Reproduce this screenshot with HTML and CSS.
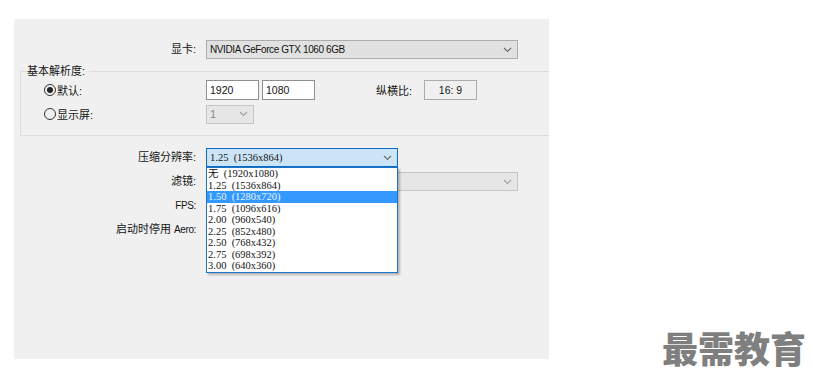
FILE: index.html
```html
<!DOCTYPE html>
<html lang="zh-CN">
<head>
  <meta charset="UTF-8" />
  <title>显示设置</title>
  <link rel="stylesheet" href="styles.css">
</head>
<body>
  <div class="screen">
    <div class="panel">
      <div class="row row-gpu">
        <span class="label">显卡:</span>
        <div class="select select-wide">
          <span class="gpu-name">NVIDIA GeForce GTX 1060 6GB</span>
          <svg class="chev" width="9" height="6" viewBox="0 0 9 6"><polyline points="1,1 4.5,4.5 8,1" /></svg>
        </div>
      </div>

      <fieldset class="group">
        <legend>基本解析度:</legend>
        <div class="group-row">
          <label class="radio"><span class="dot checked"></span>默认:</label>
          <div class="controls">
            <span class="input">1920</span>
            <span class="input">1080</span>
            <span class="ratio-label">纵横比:</span>
            <span class="ratio">16:&nbsp;9</span>
          </div>
        </div>
        <div class="group-row">
          <label class="radio"><span class="dot"></span>显示屏:</label>
          <div class="select select-small disabled">
            <span>1</span>
            <svg class="chev" width="9" height="6" viewBox="0 0 9 6"><polyline points="1,1 4.5,4.5 8,1" /></svg>
          </div>
        </div>
      </fieldset>

      <div class="rows">
        <div class="row">
          <span class="label">压缩分辨率:</span>
          <div class="combo">
            <div class="select select-open">
              <span>1.25&nbsp;&nbsp;(1536x864)</span>
              <svg class="chev" width="9" height="6" viewBox="0 0 9 6"><polyline points="1,1 4.5,4.5 8,1" /></svg>
            </div>
            <ul class="dropdown">
              <li>无&nbsp;&nbsp;(1920x1080)</li>
              <li>1.25&nbsp;&nbsp;(1536x864)</li>
              <li class="active">1.50&nbsp;&nbsp;(1280x720)</li>
              <li>1.75&nbsp;&nbsp;(1096x616)</li>
              <li>2.00&nbsp;&nbsp;(960x540)</li>
              <li>2.25&nbsp;&nbsp;(852x480)</li>
              <li>2.50&nbsp;&nbsp;(768x432)</li>
              <li>2.75&nbsp;&nbsp;(698x392)</li>
              <li>3.00&nbsp;&nbsp;(640x360)</li>
            </ul>
          </div>
        </div>
        <div class="row">
          <span class="label">滤镜:</span>
          <div class="select select-wide disabled">
            <span></span>
            <svg class="chev" width="9" height="6" viewBox="0 0 9 6"><polyline points="1,1 4.5,4.5 8,1" /></svg>
          </div>
        </div>
        <div class="row">
          <span class="label"><span class="latin">FPS:</span></span>
        </div>
        <div class="row">
          <span class="label">启动时停用 <span class="latin">Aero:</span></span>
        </div>
      </div>
    </div>

    <div class="watermark">最需教育</div>
  </div>
</body>
</html>
```

FILE: styles.css
```css
* {
  box-sizing: border-box;
}

body {
  margin: 0;
  background: #fff;
  color: #141414;
  font-family: "Liberation Sans", "Noto Sans CJK SC", sans-serif;
  font-size: 11px;
}

.screen {
  display: flex;
  align-items: flex-start;
  padding: 19px 0 0 14px;
}

.panel {
  width: 535px;
  height: 340px;
  background: #f0f0f0;
  padding-top: 21px;
}

.row {
  display: grid;
  grid-template-columns: 182px 1fr;
  column-gap: 10px;
  align-items: center;
  height: 19px;
}

.label {
  text-align: right;
  font-size: 11px;
  line-height: 19px;
  white-space: nowrap;
}

.latin,
.gpu-name {
  font-size: 10px;
  letter-spacing: -0.4px;
}

.select {
  display: flex;
  align-items: center;
  justify-content: space-between;
  height: 19px;
  padding: 0 5px 0 3px;
  background: #e1e1e1;
  border: 1px solid #adadad;
  line-height: 17px;
}

.select-wide {
  width: 312px;
}

.select-small {
  width: 48px;
}

.chev {
  fill: none;
  stroke: #6a6a6a;
  stroke-width: 1.1;
}

.disabled {
  background: #e6e6e6;
  border-color: #c6c6c6;
  color: #8a8a8a;
}

.disabled .chev {
  stroke: #a0a0a0;
}

/* resolution group */
.group {
  margin: 5px 0 0 6px;
  padding: 2px 0 11px 23px;
  border: 1px solid #dcdcdc;
  border-right: none;
  min-inline-size: 0;
}

.group legend {
  margin-left: -17px;
  padding: 0 4px 0 0;
  font-size: 11px;
  line-height: 14px;
}

.group-row {
  display: grid;
  grid-template-columns: 162px 1fr;
  align-items: center;
  height: 20px;
  margin-bottom: 4px;
}

.group-row:last-child {
  margin-bottom: 0;
}

.radio {
  display: flex;
  align-items: center;
  gap: 1px;
  font-size: 11px;
}

.dot {
  width: 12px;
  height: 12px;
  border: 1px solid #333;
  border-radius: 50%;
  display: flex;
  align-items: center;
  justify-content: center;
}

.dot.checked::after {
  content: "";
  width: 6px;
  height: 6px;
  border-radius: 50%;
  background: #222;
}

.controls {
  display: flex;
  align-items: center;
}

.input {
  width: 53px;
  height: 20px;
  margin-right: 3px;
  padding: 0 3px;
  background: #fff;
  border: 1px solid #8f8f8f;
  font-size: 10.5px;
  line-height: 18px;
}

.ratio-label {
  margin-left: 58px;
  width: 48px;
  font-size: 11px;
}

.ratio {
  width: 53px;
  height: 20px;
  border: 1px solid #adadad;
  text-align: center;
  font-size: 10.5px;
  line-height: 18px;
}

/* lower rows */
.rows {
  display: flex;
  flex-direction: column;
  gap: 5px;
  margin-top: 12px;
}

.combo {
  position: relative;
  width: 192px;
}

.select-open {
  width: 192px;
  background: #cce4f7;
  border-color: #0d6cc4;
  font-family: "Liberation Serif", "Noto Sans CJK SC", serif;
  font-size: 10.5px;
}

.dropdown {
  position: absolute;
  top: 19px;
  left: 0;
  z-index: 2;
  width: 192px;
  margin: 0;
  padding: 0;
  list-style: none;
  background: #fff;
  border: 1px solid #1f73c6;
  box-shadow: 2px 2px 2px rgba(0, 0, 0, 0.25);
  font-family: "Liberation Serif", "Noto Sans CJK SC", serif;
  font-size: 10.5px;
}

.dropdown li {
  height: 11.5px;
  padding-left: 1px;
  line-height: 11.5px;
  white-space: nowrap;
}

.dropdown li.active {
  background: #3399ff;
  color: #eaf4ff;
}

.watermark {
  margin: 308px 0 0 113px;
  color: #7f7f7f;
  font-family: "Noto Sans CJK SC", sans-serif;
  font-size: 36px;
  font-weight: 900;
  line-height: 40px;
}
```
